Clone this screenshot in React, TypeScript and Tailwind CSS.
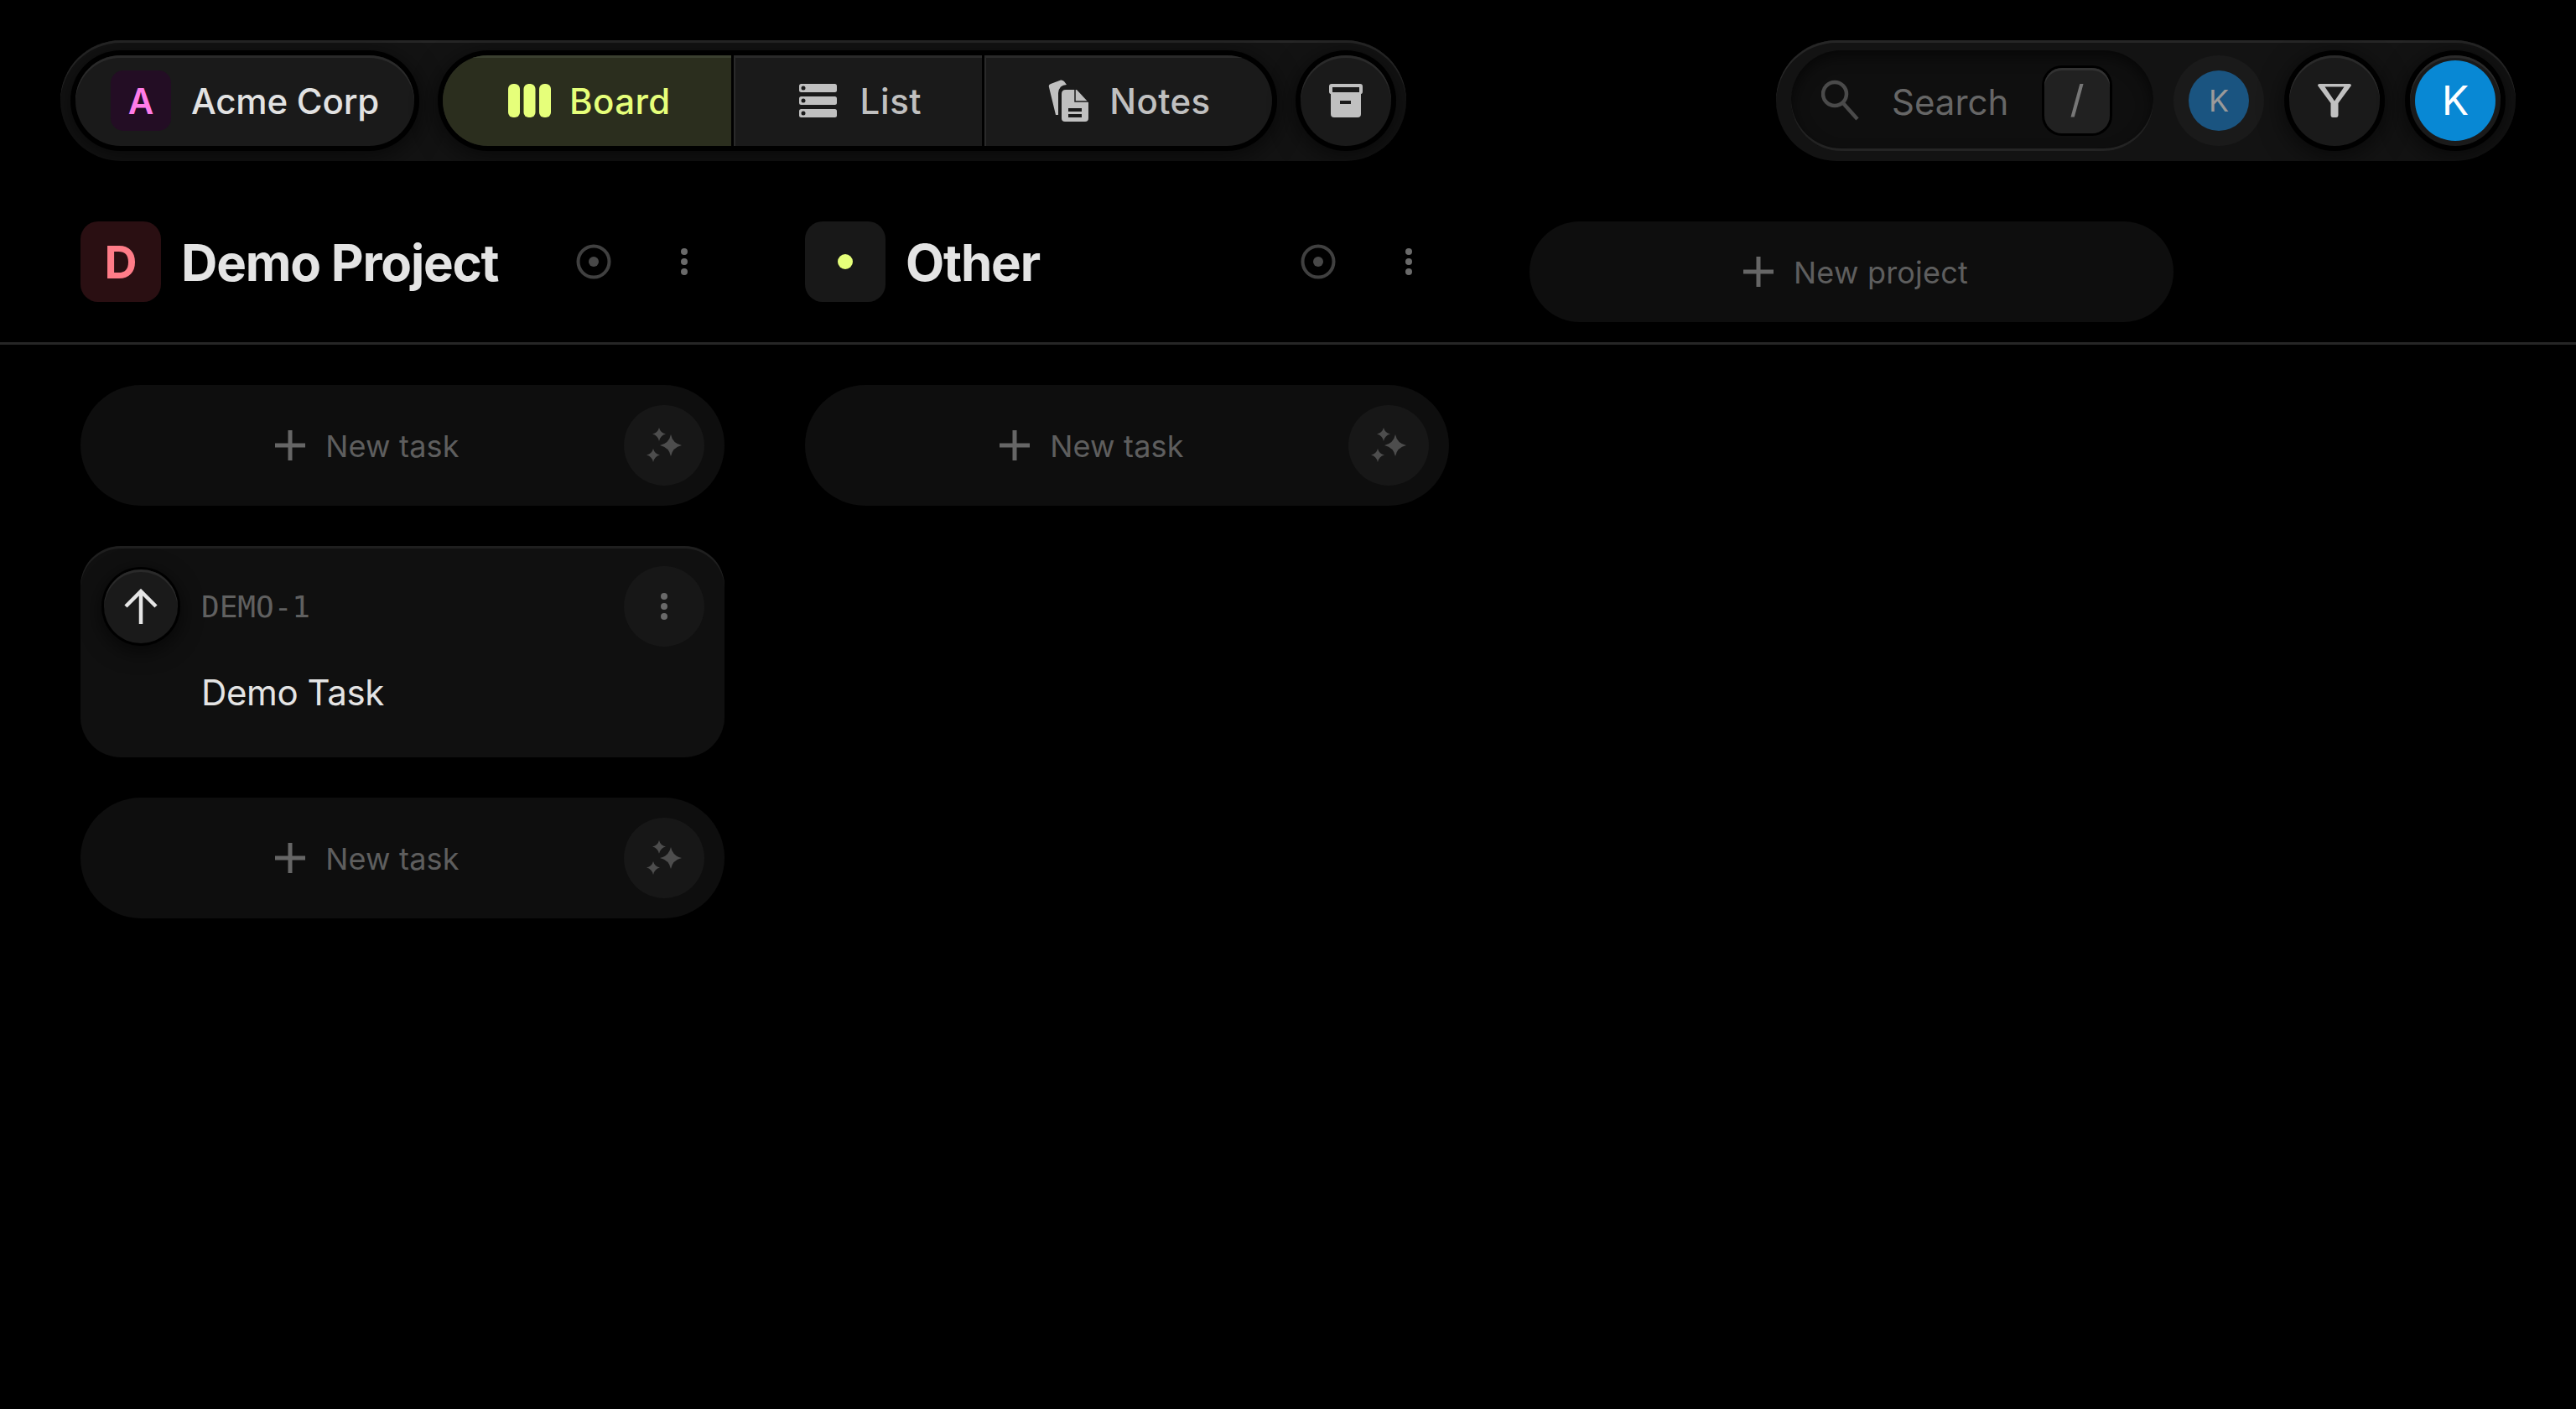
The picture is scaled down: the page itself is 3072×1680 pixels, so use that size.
const raised = "flex items-center justify-center rounded-full bg-[#1a1a1a] shadow-[0_0_0_6px_#000,inset_0_3px_0_#2a2a2a,0_6px_30px_6px_#00000099]";

const BoardIcon = () => (
  <svg width="51" height="40" viewBox="0 0 51 40" fill="#e6ff7a">
    <rect x="0" width="14" height="40" rx="6" />
    <rect x="18.5" width="14" height="40" rx="6" />
    <rect x="37" width="14" height="40" rx="6" />
  </svg>
);

const ListIcon = () => (
  <svg width="45" height="40" viewBox="0 0 45 40">
    {[0, 15, 30].map((y) => (
      <g key={y}>
        <rect y={y} width="45" height="10" rx="2.5" fill="#c0c0c0" />
        <circle cx="5" cy={y + 5} r="2.5" fill="#1a1a1a" />
      </g>
    ))}
  </svg>
);

const NotesIcon = () => (
  <svg width="50" height="52" viewBox="0 0 50 52" fill="#c0c0c0">
    <path d="M2 10Q1 7 4 6L16 1.5Q18 1 20 3L23 7Q14 7 13 17L13 43L10 43Z" />
    <path d="M17 18Q17 13 22 13L35 13L49 28L49 47Q49 51 45 51L21 51Q17 51 17 47Z" />
    <path d="M33 13V27H49" fill="none" stroke="#1a1a1a" strokeWidth="1.5" />
    <rect x="25" y="35" width="16" height="4" fill="#1a1a1a" />
    <rect x="25" y="42" width="16" height="4" fill="#1a1a1a" />
  </svg>
);

const ArchiveIcon = () => (
  <svg width="40" height="40" viewBox="0 0 40 40" fill="#c0c0c0">
    <path fillRule="evenodd" d="M3 0H37Q40 0 40 3V9Q40 12 38 12V36Q38 40 34 40H6Q2 40 2 36V12Q0 12 0 9V3Q0 0 3 0ZM4 4V10H36V4ZM13 20V24H26V20Z" />
  </svg>
);

const SearchIcon = () => (
  <svg width="48" height="50" viewBox="0 0 48 50" fill="none" stroke="#4a4a4a" strokeWidth="4.500">
    <circle cx="16" cy="17" r="14" />
    <path d="M26 28L43 47" />
  </svg>
);

const FilterIcon = () => (
  <svg width="40" height="40" viewBox="0 0 40 40" fill="#c0c0c0">
    <path fillRule="evenodd" d="M2 0H38Q40 0 40 2L24.500 23V37Q24.500 40 22 40H18Q15.500 40 15.500 37V23L0 2Q0 0 2 0ZM8.500 3.500L20 20.500L31.500 3.500Z" />
  </svg>
);

const PlusIcon = () => (
  <svg width="36" height="36" viewBox="0 0 36 36" fill="none" stroke="#666666" strokeWidth="5">
    <path d="M18 0V36M0 18H36" />
  </svg>
);

const SparkleIcon = () => (
  <svg width="42" height="42" viewBox="0 0 42 42" fill="#4d4d4d">
    <path d="M29 8Q31 18.500 42 21Q31 23.500 29 34Q27 23.500 16 21Q27 18.500 29 8Z" />
    <path d="M15 0Q16.500 6 23 7.500Q16.500 9 15 16Q13.500 9 7 7.500Q13.500 6 15 0Z" />
    <path d="M8 25Q9.500 31 16 32.500Q9.500 34 8 41Q6.500 34 0 32.500Q6.500 31 8 25Z" />
  </svg>
);

const TargetIcon = () => (
  <svg width="42" height="42" viewBox="0 0 42 42">
    <circle cx="21" cy="21" r="18.5" fill="none" stroke="#404040" strokeWidth="4" />
    <circle cx="21" cy="21" r="6" fill="#484848" />
  </svg>
);

const DotsIcon = () => (
  <svg width="12" height="32" viewBox="0 0 12 32" fill="#6a6a6a">
    <circle cx="6" cy="4" r="4" />
    <circle cx="6" cy="16" r="4" />
    <circle cx="6" cy="28" r="4" />
  </svg>
);

const ArrowUpIcon = () => (
  <svg width="40" height="42" viewBox="0 0 40 42" fill="none" stroke="#e6e6e6" strokeWidth="4.500">
    <path d="M20 42V3M2 21L20 3L38 21" />
  </svg>
);

const ColumnHeader = ({ name, badge }: { name: string; badge: React.ReactNode }) => (
  <div className="flex w-[768px] h-[96px] items-center">
    {badge}
    <span className="ml-[24px] pt-[2px] text-[60px] font-bold tracking-[-1.2px] text-[#e4e4e4]">{name}</span>
    <button className="ml-auto flex size-[96px] items-center justify-center">
      <TargetIcon />
    </button>
    <button className="ml-[12px] flex size-[96px] items-center justify-center">
      <DotsIcon />
    </button>
  </div>
);

const NewTask = () => (
  <div className="relative flex h-[144px] w-[768px] items-center justify-center rounded-full bg-[#0e0e0e] pr-[84px]">
    <PlusIcon />
    <span className="ml-[24px] pt-[2px] text-[36px] tracking-[0.2px] text-[#5e5e5e]">New task</span>
    <button className="absolute right-[24px] flex size-[96px] items-center justify-center rounded-full bg-[#171717]">
      <SparkleIcon />
    </button>
  </div>
);

export default function App() {
  return (
    <div className="h-[1680px] w-full overflow-hidden bg-black font-[family-name:Inter,sans-serif]">
      <header className="flex justify-between pl-[72px] pr-[72px] pt-[48px]">
        <div className="flex h-[144px] items-center gap-[34px] rounded-full bg-[#131313] px-[18px] shadow-[inset_0_3px_0_#262626]">
          <button className={`${raised} h-[108px] gap-[24px] px-[42px]`}>
            <span className="flex size-[72px] items-center justify-center rounded-[15px] bg-[#230d24] text-[42px] font-semibold text-[#ff7ce8]">A</span>
            <span className="text-[42px] font-medium tracking-[-0.2px] text-[#e2e2e2]">Acme Corp</span>
          </button>
          <div className="flex h-[108px] overflow-hidden rounded-full bg-[#1a1a1a] shadow-[0_0_0_6px_#000,0_6px_30px_6px_#00000099]">
            <button className="flex items-center gap-[22px] bg-[#2b2e1e] pl-[78px] pr-[72px] shadow-[inset_0_3px_0_#3b4030]">
              <BoardIcon />
              <span className="text-[42px] font-medium tracking-[0.4px] text-[#e6ff7a]">Board</span>
            </button>
            <div className="w-[3px] bg-[#000]" />
            <button className="flex items-center gap-[28px] border-l-[2px] border-[#2a2a2a] pl-[76px] pr-[72px] shadow-[inset_0_3px_0_#2a2a2a]">
              <ListIcon />
              <span className="text-[42px] font-medium tracking-[0.6px] text-[#c0c0c0]">List</span>
            </button>
            <div className="w-[3px] bg-[#000]" />
            <button className="flex items-center gap-[24px] border-l-[2px] border-[#2a2a2a] px-[73px] shadow-[inset_0_3px_0_#2a2a2a]">
              <NotesIcon />
              <span className="text-[42px] font-medium tracking-[0.4px] text-[#c0c0c0]">Notes</span>
            </button>
          </div>
          <button className={`${raised} size-[108px]`}>
            <ArchiveIcon />
          </button>
        </div>

        <div className="flex h-[144px] items-center rounded-full bg-[#131313] px-[18px] shadow-[inset_0_3px_0_#262626]">
          <div className="flex h-[120px] w-[432px] items-center rounded-full bg-[#0f0f0f] pl-[36px] shadow-[inset_0_6px_18px_#00000099,inset_0_-3px_0_#2a2a2a]">
            <SearchIcon />
            <span className="ml-[36px] pt-[2px] text-[42px] text-[#666666]">Search</span>
            <span className="ml-auto mr-[52px] flex h-[78px] w-[78px] items-center justify-center rounded-[21px] bg-[#212121] font-[family-name:'Liberation_Sans',sans-serif] text-[54px] text-[#777777] shadow-[0_0_0_3px_#000,inset_0_3px_0_#323232]">/</span>
          </div>
          <div className="ml-[24px] flex size-[108px] items-center justify-center rounded-full bg-[#1a1a1a]">
            <span className="flex size-[72px] items-center justify-center rounded-full bg-[#1a5480] text-[36px] text-[#9a9a9a]">K</span>
          </div>
          <button className={`${raised} ml-[30px] size-[108px]`}>
            <FilterIcon />
          </button>
          <button className={`${raised} ml-[36px] size-[108px]`}>
            <span className="flex size-[96px] items-center justify-center rounded-full bg-[#0888d4] text-[48px] text-white">K</span>
          </button>
        </div>
      </header>

      <section className="mt-[72px] flex h-[147px] gap-[96px] border-b-[3px] border-[#262626] pl-[96px]">
        <ColumnHeader
          name="Demo Project"
          badge={<span className="flex size-[96px] items-center justify-center rounded-[21px] bg-[#2a0f12] text-[54px] font-bold text-[#ff7c88]">D</span>}
        />
        <ColumnHeader
          name="Other"
          badge={
            <span className="flex size-[96px] items-center justify-center rounded-[21px] bg-[#181818]">
              <span className="size-[18px] rounded-full bg-[#e6ff7a]" />
            </span>
          }
        />
        <div className="flex h-[120px] w-[768px] items-center justify-center gap-[24px] rounded-full bg-[#0e0e0e] pl-[10px]">
          <PlusIcon />
          <span className="pt-[2px] text-[36px] tracking-[0.2px] text-[#5e5e5e]">New project</span>
        </div>
      </section>

      <main className="flex gap-[96px] pl-[96px] pt-[48px]">
        <div className="flex w-[768px] flex-col gap-[48px]">
          <NewTask />
          <div className="h-[252px] rounded-[48px] bg-[#101010] p-[24px] pb-0 shadow-[inset_0_3px_0_#1f1f1f]">
            <div className="flex h-[96px] items-center">
              <button className="ml-[4px] flex size-[88px] items-center justify-center rounded-full bg-[#1a1a1a] shadow-[0_0_0_3px_#000,inset_0_3px_0_#2a2a2a,0_6px_24px_4px_#00000099]">
                <ArrowUpIcon />
              </button>
              <span className="ml-[28px] pt-[2px] font-[family-name:'DejaVu_Sans_Mono',monospace] text-[36px] text-[#606060]">DEMO-1</span>
              <button className="ml-auto flex size-[96px] items-center justify-center rounded-full bg-[#171717]">
                <DotsIcon />
              </button>
            </div>
            <div className="flex h-[108px] items-center pl-[120px]">
              <span className="text-[42px] tracking-[-0.4px] text-[#e4e4e4]">Demo Task</span>
            </div>
          </div>
          <NewTask />
        </div>
        <div className="w-[768px]">
          <NewTask />
        </div>
      </main>
    </div>
  );
}
